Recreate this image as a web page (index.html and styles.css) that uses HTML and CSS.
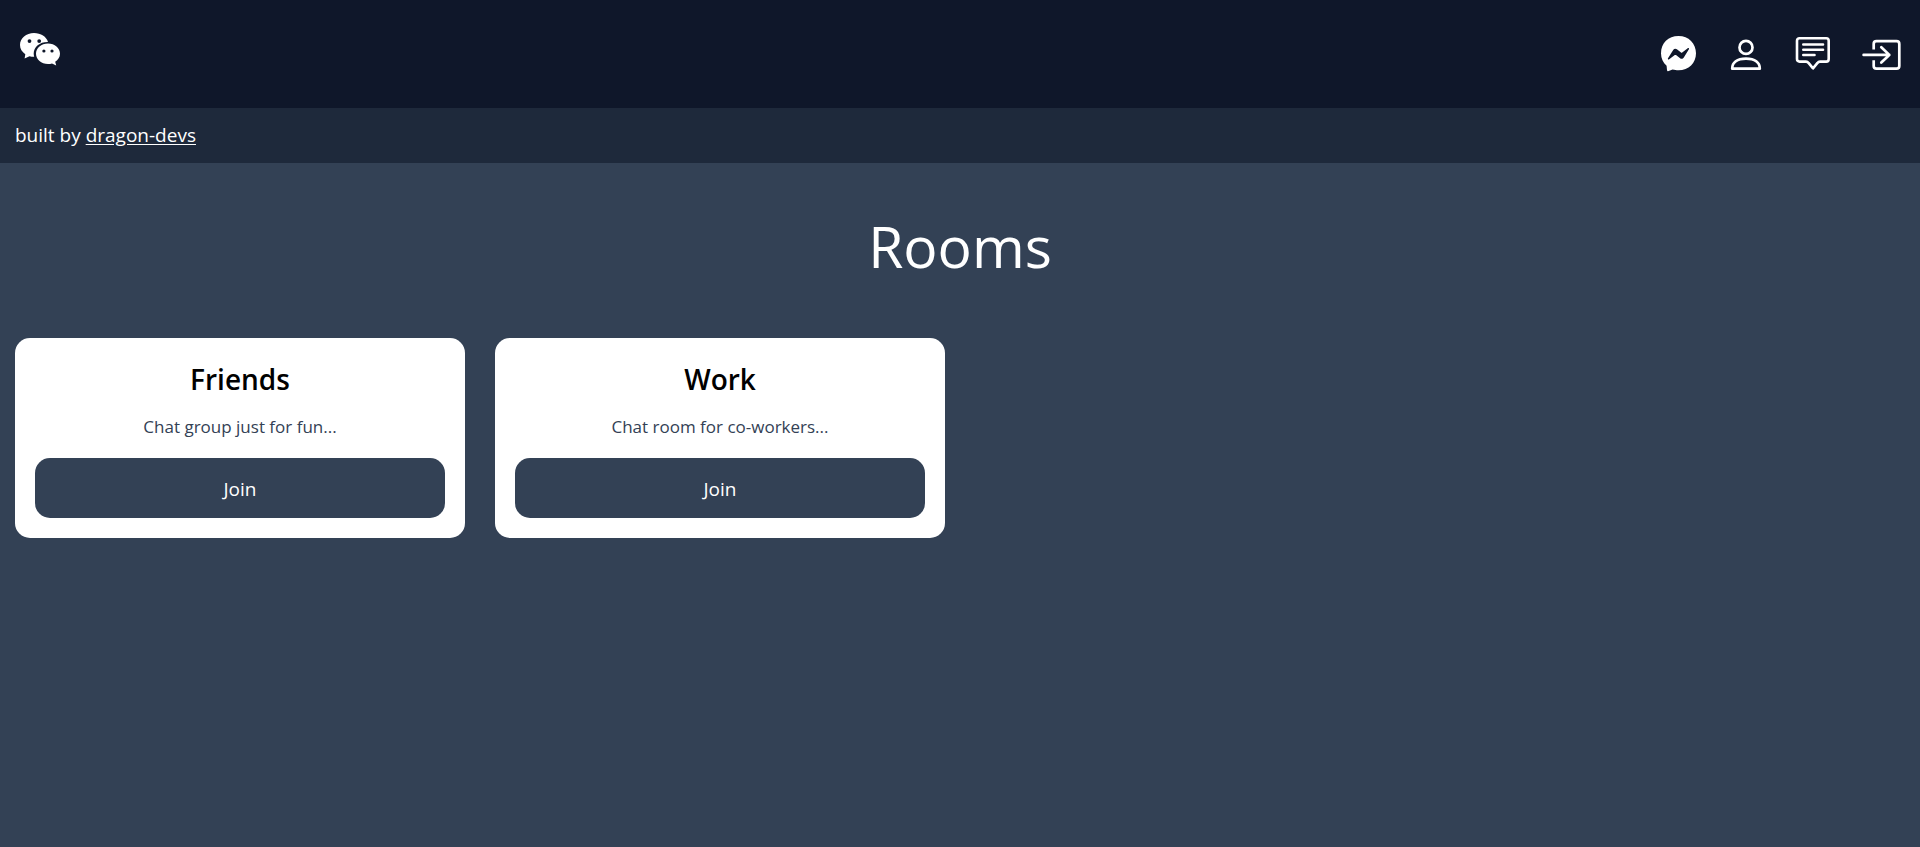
FILE: index.html
```html
<!DOCTYPE html>
<html lang="en">
<head>
<meta charset="utf-8">
<meta name="viewport" content="width=device-width, initial-scale=1">
<title>Rooms</title>
<link rel="stylesheet" href="styles.css">
</head>
<body>
<header class="topbar">
  <a class="logo" href="#" aria-label="Home">
    <svg width="40" height="33" viewBox="0 0 40 33" fill="currentColor" aria-hidden="true">
      <path fill-rule="evenodd" d="M14 0C6.2 0 0 5.3 0 12c0 3.700 2 7 5.300 9.200L4.600 25.600 9.500 23.200c1.500.4 2.700.6 4.700.6A11.500 11.500 0 0 1 13.700 20.500C13.700 13.800 20 8.800 28 9C26.600 3.800 20.800 0 14 0ZM9.500 6.200a1.900 1.900 0 1 1 0 3.800a1.900 1.900 0 1 1 0-3.800ZM19.200 6.200a1.900 1.900 0 1 1 0 3.800a1.900 1.900 0 1 1 0-3.800Z"/>
      <path fill-rule="evenodd" d="M28 10.500C21.300 10.500 16 15.100 16 20.700S21.300 31 28 31c1.500 0 2.800-.2 4-.6l4.200 2.100-1-3.700C38 27 40 24 40 20.700C40 15.100 34.700 10.500 28 10.500ZM23.900 16.400a1.600 1.600 0 1 1 0 3.200a1.600 1.600 0 1 1 0-3.200ZM32 16.400a1.600 1.600 0 1 1 0 3.200a1.600 1.600 0 1 1 0-3.200Z"/>
    </svg>
  </a>
  <nav class="actions" aria-label="Main">
    <a class="action" href="#" aria-label="Messenger">
      <svg width="36" height="36" viewBox="0 0 36 36" fill="currentColor" aria-hidden="true">
        <path fill-rule="evenodd" d="M18.500 0C8.300 0 1 7.200 1 17.200c0 5.200 2.100 9.400 5.600 12.500L7 34c.1.900.9 1.500 1.700 1.100l3.900-1.600c1.900.6 3.700.7 5.900.7 10.200 0 17.500-7.200 17.500-17S28.700 0 18.500 0ZM8 22.200l5.200-8.200c.8-1.300 2.500-1.600 3.700-.7l4.100 3.100c.4.3.8.3 1.200 0l5.500-4.200c.8-.6 1.800.3 1.200 1.100l-5.100 8.200c-.8 1.300-2.500 1.600-3.700.7l-4.100-3.100c-.4-.3-.8-.3-1.200 0l-5.600 4.200c-.8.600-1.700-.300-1.200-1.100Z"/>
      </svg>
    </a>
    <a class="action" href="#" aria-label="Profile">
      <svg width="36" height="36" viewBox="0 0 36 36" fill="none" stroke="currentColor" stroke-width="2.700" aria-hidden="true">
        <circle cx="19" cy="11.400" r="6.500"/>
        <path d="M5.200 32.700C5.200 26.500 10 22.700 19 22.700s13.800 3.800 13.800 10Z" stroke-linejoin="round"/>
      </svg>
    </a>
    <a class="action" href="#" aria-label="Messages">
      <svg width="36" height="36" viewBox="0 0 36 36" fill="none" stroke="currentColor" stroke-width="2.600" stroke-linecap="round" stroke-linejoin="round" aria-hidden="true">
        <path d="M5.600 2.200H32.200Q34.700 2.200 34.700 4.800V23Q34.700 25.600 32.200 25.600H26Q24.400 25.600 23.500 26.900L19 32.300 14.500 26.900Q13.600 25.600 12 25.600H5.600Q3 25.600 3 23V4.800Q3 2.200 5.600 2.200Z"/>
        <path d="M9.300 8.500H29M9.300 13.700H29M9.300 19H20.500"/>
      </svg>
    </a>
    <a class="action" href="#" aria-label="Log out">
      <svg width="40" height="36" viewBox="0 0 40 36" fill="none" stroke="currentColor" stroke-width="2.700" stroke-linecap="round" stroke-linejoin="round" aria-hidden="true">
        <path d="M12.700 13.500V8Q12.700 5.200 15.500 5.200H35.500Q38.300 5.200 38.300 8V30Q38.300 32.700 35.500 32.700H15.500Q12.700 32.700 12.700 30V24.300" stroke-linecap="butt"/>
        <path d="M2.600 18.900H28.300M20.300 11.200L28.300 18.900L20.300 26.500"/>
      </svg>
    </a>
  </nav>
</header>
<div class="credit">built by <a class="credit-link" href="#">dragon-devs</a></div>
<main class="page">
  <h1 class="page-title">Rooms</h1>
  <div class="rooms">
    <article class="card">
      <h2 class="card-title">Friends</h2>
      <p class="card-text">Chat group just for fun...</p>
      <button class="join" type="button">Join</button>
    </article>
    <article class="card">
      <h2 class="card-title">Work</h2>
      <p class="card-text">Chat room for co-workers...</p>
      <button class="join" type="button">Join</button>
    </article>
  </div>
</main>
</body>
</html>
```
FILE: styles.css
```css
* { box-sizing: border-box; margin: 0; }

body {
  min-height: 100vh;
  background: #334155;
  color: #fff;
  font-family: "Segoe UI", "Open Sans", "Noto Sans", sans-serif;
  font-size: 19px;
  line-height: 30px;
}

.topbar {
  display: flex;
  justify-content: space-between;
  align-items: flex-start;
  padding: 33px 19px 36px 20px;
  background: #0f172a;
}

.logo,
.action { display: block; color: inherit; }

.logo svg,
.action svg { display: block; }

.actions {
  display: flex;
  gap: 31px;
  padding-top: 3px;
}

.credit {
  padding: 12px 15px 13px;
  background: #1e293b;
}

.credit-link {
  color: inherit;
  text-decoration: underline;
  text-underline-offset: 2px;
}

.page { padding: 45px 15px; }

.page-title {
  margin-bottom: 54px;
  font-size: 57px;
  font-weight: 400;
  line-height: 76px;
  text-align: center;
}

.rooms {
  display: grid;
  grid-template-columns: repeat(4, 1fr);
  gap: 30px;
}

.card {
  padding: 20px;
  border-radius: 15px;
  background: #fff;
  text-align: center;
}

.card-title {
  margin-bottom: 14px;
  color: #000;
  font-size: 28px;
  font-weight: 600;
  line-height: 42px;
}

.card-text {
  margin-bottom: 18px;
  color: #334155;
  font-size: 17px;
  line-height: 26px;
}

.join {
  display: block;
  width: 100%;
  padding: 16px 15px 14px;
  border: 0;
  border-radius: 15px;
  background: #334155;
  color: #fff;
  font: inherit;
  cursor: pointer;
}
```
